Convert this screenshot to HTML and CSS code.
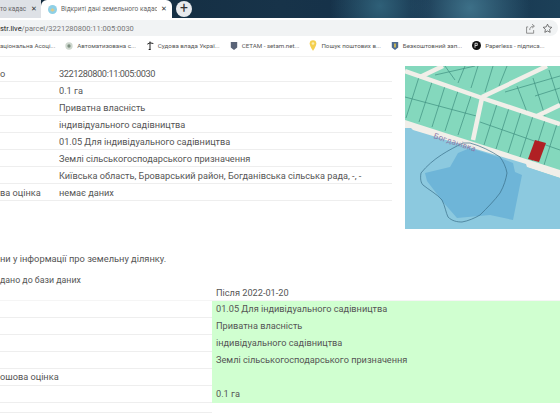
FILE: index.html
```html
<!DOCTYPE html>
<html>
<head>
    <meta charset="UTF-8">
    <title>Відкриті дані земельного кадастру</title>
    <link rel="stylesheet" href="styles.css">
</head>
<body>
    <div class="tabstrip">
        <div class="tab tab-old"><span class="tab-title">то кадас</span><span class="tab-x">✕</span></div>
        <div class="tab tab-active">
            <svg class="tab-icon" width="9" height="9" viewBox="0 0 12 12"><circle cx="6" cy="6" r="6" fill="#8fd0e6"/><path d="M3 7l3-3 3 3-3 2z" fill="#dcc98a"/></svg>
            <span class="tab-title">Відкриті дані земельного кадас</span><span class="tab-x">✕</span>
        </div>
        <div class="tab-new">+</div>
    </div>
    <div class="toolbar">
        <div class="addressbar">
            <div class="url"><span class="host">str.live</span>/parcel/3221280800:11:005:0030</div>
            <svg width="11" height="11" viewBox="0 0 14 14" fill="none" stroke="#777"><path d="M4 5H2v8h9V9M6 9c0-3 2-5 5-5M9 1.500l3 2.500-3 2.500"/></svg>
            <svg width="11" height="11" viewBox="0 0 14 14" fill="none" stroke="#555"><path d="M7 1.500l1.700 3.500 3.800.5-2.800 2.600.7 3.800L7 10.100l-3.400 1.800.7-3.800L1.500 5.500l3.800-.5z"/></svg>
        </div>
    </div>
    <div class="bookmarks">
        <span class="bookmark bookmark-first">аціональна Асоці...</span>
        <span class="bookmark"><svg width="8" height="8" viewBox="0 0 12 12"><circle cx="6" cy="6" r="5.500" fill="#cfd8cf"/><circle cx="6" cy="6" r="2.500" fill="#7d8f80"/></svg>Автоматизована с...</span>
        <span class="bookmark"><svg width="8" height="11" viewBox="0 0 12 14" fill="none" stroke="#222" stroke-width="1.500"><path d="M6 1v12M2 5l4-2 5 1M4 13h3"/></svg>Судова влада Украї...</span>
        <span class="bookmark"><svg width="8" height="10" viewBox="0 0 10 12"><path d="M1 1h8v7l-4 3-4-3z" fill="#5a6478"/></svg>СЕТАМ - setam.net...</span>
        <span class="bookmark"><svg width="8" height="11" viewBox="0 0 12 16"><path d="M6 0a5 5 0 0 1 5 5c0 4-5 11-5 11S1 9 1 5a5 5 0 0 1 5-5z" fill="#f4cf4f"/><circle cx="6" cy="5" r="2" fill="#fbeeb0"/></svg>Пошук поштових в...</span>
        <span class="bookmark"><svg width="8" height="10" viewBox="0 0 10 12"><path d="M1 1h8v7l-4 3-4-3z" fill="#4c6a8f"/><path d="M4 3h2v5H4z" fill="#e2c64b"/></svg>Безкоштовний зап...</span>
        <span class="bookmark"><svg width="9" height="9" viewBox="0 0 12 12"><circle cx="6" cy="6" r="6" fill="#111"/><path d="M4 3v6M4 3h3v3H4" stroke="#fff" fill="none"/></svg>Paperless - підписа...</span>
    </div>
    <div class="page">
        <div class="summary">
            <div class="info">
                <div class="info-row"><span class="info-key">о</span><span class="digits">3221280800:11:005:0030</span></div>
                <div class="info-row"><span class="info-key"></span><span>0.1 га</span></div>
                <div class="info-row"><span class="info-key"></span><span>Приватна власність</span></div>
                <div class="info-row"><span class="info-key"></span><span>індивідуального садівництва</span></div>
                <div class="info-row"><span class="info-key"></span><span>01.05 Для індивідуального садівництва</span></div>
                <div class="info-row"><span class="info-key"></span><span>Землі сільськогосподарського призначення</span></div>
                <div class="info-row"><span class="info-key"></span><span>Київська область, Броварський район, Богданівська сільська рада, -, -</span></div>
                <div class="info-row"><span class="info-key">ва оцінка</span><span>немає даних</span></div>
            </div>
            <svg class="map" width="155" height="163" viewBox="0 0 155 163">
                <rect width="155" height="163" fill="#84d8bd"/>
                <g fill="none" stroke="#3f8f80" stroke-width="0.7">
                    <path d="M14 11L1 52M27 16L14 56M40 20L27 61M53 25L40 65M66 30L53 69"/>
                    <path d="M92 38L79 79M104 42L91 83M116 46L103 87M128 50L115 91M140 54L127 95M152 58L139 99"/>
                    <path d="M0 31L75 51M75 56L155 84"/>
                    <path d="M40 0L50 14M60 0L53 17M73 0L66 22M88 0L80 26M102 0L94 20M30 9L70 0"/>
                    <path d="M112 20L122 46M128 12L140 50M144 4L155 38M100 26L155 10M130 30L155 22"/>
                </g>
                <g fill="none" stroke="#f1efe9" stroke-width="4.500">
                    <path d="M0 5L77 32L155 58"/>
                    <path d="M15 11L38 0M77 31L142 0M77 32L68 74M132 50L155 39"/>
                </g>
                <path d="M0 54L155 104V112L0 62z" fill="#f1efe9"/>
                <path d="M0 62h6l2 2L121 98l1 3 33 11v51H0z" fill="#8cc9df"/>
                <path d="M20 107L45 101L53 87L65 82L93 91L108 97L110 106L117 109L108 154L85 149L52 152L38 136L22 115z" fill="#6eb5d8"/>
                <path d="M58 77C44 84 28 92 16 107C15 113 16 117 18 119C24 124 32 128 37 134C40 140 41 147 43 151C47 155 52 156 57 156C63 155 70 152 75 149C82 142 90 134 95 127C99 120 101 113 102 107C101 101 98 95 95 91C86 85 76 80 65 77z" fill="none" stroke="#3a6f88" stroke-width="0.7"/>
                <path d="M130 74L141 77L134 96L123 93z" fill="#b02024"/>
                <text class="map-label" x="28" y="72" transform="rotate(18 28 72)">Богданівка</text>
            </svg>
        </div>
        <p class="note">ни у інформації про земельну ділянку.</p>
        <p class="note note-small">дано до бази даних</p>
        <div class="changes">
            <div class="change-row change-head"><span class="change-key"></span><span class="change-val">Після 2022-01-20</span></div>
            <div class="change-row"><span class="change-key"></span><span class="change-val new">01.05 Для індивідуального садівництва</span></div>
            <div class="change-row"><span class="change-key"></span><span class="change-val new">Приватна власність</span></div>
            <div class="change-row"><span class="change-key"></span><span class="change-val new">індивідуального садівництва</span></div>
            <div class="change-row"><span class="change-key"></span><span class="change-val new">Землі сільськогосподарського призначення</span></div>
            <div class="change-row"><span class="change-key">ошова оцінка</span><span class="change-val new"></span></div>
            <div class="change-row"><span class="change-key"></span><span class="change-val new">0.1 га</span></div>
            <div class="change-row change-tail"><span class="change-key"></span><span class="change-val"></span></div>
        </div>
    </div>
</body>
</html>
```

FILE: styles.css
```css
html, body { margin: 0; height: 420px; overflow: hidden; }
body { font-family: Roboto, "Liberation Sans", Arial, sans-serif; color: #555; background: #fff; }

.tabstrip { height: 18px; display: flex; align-items: flex-end; background: radial-gradient(circle at 470px 8px, #3d7088, transparent 60px), radial-gradient(circle at 380px 6px, #2f6078, transparent 50px), linear-gradient(90deg, #12293c, #173349 50%, #14304a 75%, #1c4058); }
.tab { height: 18px; display: flex; align-items: center; font-size: 6.500px; color: #666; box-sizing: border-box; flex: none; }
.tab-old { width: 41px; background: #dee1e6; padding-right: 4px; }
.tab-active { width: 131px; background: #fff; padding-left: 7px; padding-right: 5px; border-radius: 6px 6px 0 0; gap: 4px; }
.tab-title { flex: 1; min-width: 0; white-space: nowrap; overflow: hidden; }
.tab-x { font-size: 7px; color: #333; flex: none; }
.tab-new { width: 16px; height: 16px; margin-left: 4px; margin-bottom: 1px; border-radius: 50%; background: #e8eaed; color: #333; font-size: 14px; line-height: 15px; text-align: center; }

.toolbar { height: 18px; padding-top: 2px; background: #fff; }
.addressbar { height: 16px; margin-right: 2px; padding-right: 5px; background: #f1f3f4; border-radius: 0 8px 8px 0; display: flex; align-items: center; gap: 6px; }
.url { flex: 1; font-size: 7.500px; color: #777; white-space: nowrap; }
.host { color: #222; }

.bookmarks { height: 19px; padding-bottom: 3px; display: flex; align-items: center; background: #fff; border-bottom: 1px solid #f1f1f1; font-size: 6.200px; color: #555; white-space: nowrap; overflow: hidden; box-sizing: border-box; }
.bookmark { display: flex; align-items: center; gap: 4px; margin-right: 10px; flex: none; }

.page { font-size: 9.200px; }
.summary { display: flex; padding-top: 8px; }
.info { width: 392px; flex: none; }
.info-row { height: 17px; display: flex; align-items: center; border-bottom: 1px solid #eee; box-sizing: border-box; white-space: nowrap; }
.info-key { width: 59px; flex: none; overflow: hidden; }
.digits { letter-spacing: -0.400px; }
.map { margin: 1px 0 0 13px; flex: none; }
.map-label { font-family: "DejaVu Sans", sans-serif; font-size: 7.500px; fill: #8a7aa8; }

.note { margin: 24px 0 0; font-size: 9.300px; line-height: 12px; }
.note-small { margin-top: 9px; font-size: 8.800px; }

.changes { margin-top: 0; }
.change-row { height: 17px; display: flex; box-sizing: border-box; border-bottom: 1px solid #eee; }
.change-key { width: 212px; flex: none; line-height: 16px; white-space: nowrap; }
.change-val { flex: 1; padding-left: 4px; line-height: 16px; white-space: nowrap; }
.new { background: #d0ffd0; height: 17px; border-bottom: 1px solid #c2ecc4; }
.change-head { height: 15px; border-bottom: 1px solid #f5f5f5; }
.change-head .change-val { line-height: 14px; }
.change-tail { height: 10px; }
.change-tail .change-val { background: #fff; margin-bottom: -1px; height: 10px; }
```
